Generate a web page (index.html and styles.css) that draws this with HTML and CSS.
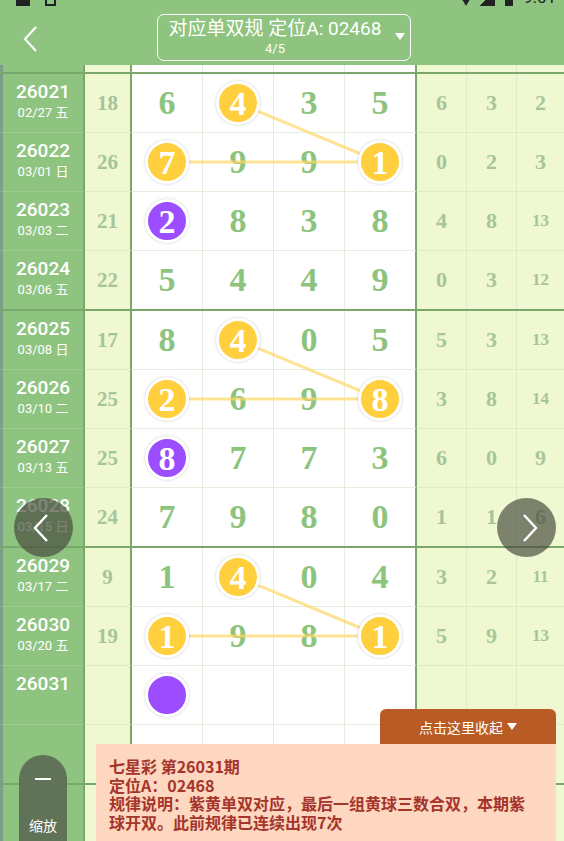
FILE: index.html
```html
<!DOCTYPE html>
<html lang="zh">
<head>
<meta charset="utf-8">
<link rel="stylesheet" href="styles.css">
</head>
<body>
<div class="app">
  <header class="topbar">
    <div class="status">
      <span class="sq sq1"></span><span class="sq sq2"></span>
      <span class="spacer"></span>
      <span class="tri"></span><span class="sig"></span><span class="bat"></span>
      <span class="time">9:01</span>
    </div>
    <div class="nav">
      <div class="back">
        <svg width="16" height="26" viewBox="0 0 16 26"><polyline points="13,1 2,13 13,25" fill="none" stroke="#fff" stroke-width="2"/></svg>
      </div>
      <div class="title">
        <div class="t1">对应单双规 定位A: 02468</div>
        <div class="t2">4/5</div>
        <span class="caret"></span>
      </div>
    </div>
  </header>

  <main class="table">
    <div class="row partial">
      <div class="c-id"></div><div class="c-sum"></div><div class="c-m"></div><div class="c-m"></div><div class="c-m"></div><div class="c-m last"></div><div class="c-r"></div><div class="c-r"></div><div class="c-r"></div>
    </div>
    <div class="sep"></div>

    <section class="group">
      <div class="row">
        <div class="c-id"><b>26021</b><span>02/27 五</span></div><div class="c-sum">18</div>
        <div class="c-m">6</div><div class="c-m"><i class="ball y">4</i></div><div class="c-m">3</div><div class="c-m last">5</div>
        <div class="c-r">6</div><div class="c-r">3</div><div class="c-r">2</div>
      </div>
      <div class="row">
        <div class="c-id"><b>26022</b><span>03/01 日</span></div><div class="c-sum">26</div>
        <div class="c-m"><i class="ball y">7</i></div><div class="c-m">9</div><div class="c-m">9</div><div class="c-m last"><i class="ball y">1</i></div>
        <div class="c-r">0</div><div class="c-r">2</div><div class="c-r">3</div>
      </div>
      <div class="row">
        <div class="c-id"><b>26023</b><span>03/03 二</span></div><div class="c-sum">21</div>
        <div class="c-m"><i class="ball p">2</i></div><div class="c-m">8</div><div class="c-m">3</div><div class="c-m last">8</div>
        <div class="c-r">4</div><div class="c-r">8</div><div class="c-r small">13</div>
      </div>
      <div class="row end">
        <div class="c-id"><b>26024</b><span>03/06 五</span></div><div class="c-sum">22</div>
        <div class="c-m">5</div><div class="c-m">4</div><div class="c-m">4</div><div class="c-m last">9</div>
        <div class="c-r">0</div><div class="c-r">3</div><div class="c-r small">12</div>
      </div>
      <svg class="links" width="564" height="236" viewBox="0 0 564 236"><line x1="238" y1="29" x2="380" y2="88"/><line x1="167" y1="88" x2="380" y2="88"/></svg>
    </section>
    <div class="sep"></div>

    <section class="group">
      <div class="row">
        <div class="c-id"><b>26025</b><span>03/08 日</span></div><div class="c-sum">17</div>
        <div class="c-m">8</div><div class="c-m"><i class="ball y">4</i></div><div class="c-m">0</div><div class="c-m last">5</div>
        <div class="c-r">5</div><div class="c-r">3</div><div class="c-r small">13</div>
      </div>
      <div class="row">
        <div class="c-id"><b>26026</b><span>03/10 二</span></div><div class="c-sum">25</div>
        <div class="c-m"><i class="ball y">2</i></div><div class="c-m">6</div><div class="c-m">9</div><div class="c-m last"><i class="ball y">8</i></div>
        <div class="c-r">3</div><div class="c-r">8</div><div class="c-r small">14</div>
      </div>
      <div class="row">
        <div class="c-id"><b>26027</b><span>03/13 五</span></div><div class="c-sum">25</div>
        <div class="c-m"><i class="ball p">8</i></div><div class="c-m">7</div><div class="c-m">7</div><div class="c-m last">3</div>
        <div class="c-r">6</div><div class="c-r">0</div><div class="c-r">9</div>
      </div>
      <div class="row end">
        <div class="c-id"><b>26028</b><span>03/15 日</span></div><div class="c-sum">24</div>
        <div class="c-m">7</div><div class="c-m">9</div><div class="c-m">8</div><div class="c-m last">0</div>
        <div class="c-r">1</div><div class="c-r">1</div><div class="c-r">6</div>
      </div>
      <svg class="links" width="564" height="236" viewBox="0 0 564 236"><line x1="238" y1="29" x2="380" y2="88"/><line x1="167" y1="88" x2="380" y2="88"/></svg>
    </section>
    <div class="sep"></div>

    <section class="group">
      <div class="row">
        <div class="c-id"><b>26029</b><span>03/17 二</span></div><div class="c-sum">9</div>
        <div class="c-m">1</div><div class="c-m"><i class="ball y">4</i></div><div class="c-m">0</div><div class="c-m last">4</div>
        <div class="c-r">3</div><div class="c-r">2</div><div class="c-r small">11</div>
      </div>
      <div class="row">
        <div class="c-id"><b>26030</b><span>03/20 五</span></div><div class="c-sum">19</div>
        <div class="c-m"><i class="ball y">1</i></div><div class="c-m">9</div><div class="c-m">8</div><div class="c-m last"><i class="ball y">1</i></div>
        <div class="c-r">5</div><div class="c-r">9</div><div class="c-r small">13</div>
      </div>
      <div class="row">
        <div class="c-id"><b>26031</b><span>&nbsp;</span></div><div class="c-sum"></div>
        <div class="c-m"><i class="ball p"></i></div><div class="c-m"></div><div class="c-m"></div><div class="c-m last"></div>
        <div class="c-r"></div><div class="c-r"></div><div class="c-r"></div>
      </div>
      <div class="row end">
        <div class="c-id"></div><div class="c-sum"></div>
        <div class="c-m"></div><div class="c-m"></div><div class="c-m"></div><div class="c-m last"></div>
        <div class="c-r"></div><div class="c-r"></div><div class="c-r"></div>
      </div>
      <svg class="links" width="564" height="236" viewBox="0 0 564 236"><line x1="238" y1="29" x2="380" y2="88"/><line x1="167" y1="88" x2="380" y2="88"/></svg>
    </section>
    <div class="sep"></div>
    <div class="row">
      <div class="c-id"></div><div class="c-sum"></div><div class="c-m"></div><div class="c-m"></div><div class="c-m"></div><div class="c-m last"></div><div class="c-r"></div><div class="c-r"></div><div class="c-r"></div>
    </div>
  </main>

  <button class="arrow arrow-left" aria-label="上一个">
    <svg width="20" height="30" viewBox="0 0 20 30"><polyline points="15,2 3,15 15,28" fill="none" stroke="#fff" stroke-width="2.4"/></svg>
  </button>
  <button class="arrow arrow-right" aria-label="下一个">
    <svg width="20" height="30" viewBox="0 0 20 30"><polyline points="5,2 17,15 5,28" fill="none" stroke="#fff" stroke-width="2.4"/></svg>
  </button>

  <div class="zoom-btn">
    <span class="minus"></span>
    <span class="zlabel">缩放</span>
  </div>

  <div class="sheet">
    <div class="tab">点击这里收起 <span class="tcaret"></span></div>
    <div class="panel">
      <p>七星彩 第26031期</p>
      <p>定位A：02468</p>
      <p>规律说明：紫黄单双对应，最后一组黄球三数合双，本期紫球开双。此前规律已连续出现7次</p>
    </div>
  </div>
</div>
</body>
</html>
```
FILE: styles.css
```css
* { box-sizing: border-box; margin: 0; padding: 0; }
html, body { width: 564px; height: 841px; overflow: hidden; }
body {
  font-family: Roboto, "Noto Sans CJK SC", sans-serif;
  background: #eff8d0;
}
.app { position: relative; width: 564px; height: 841px; overflow: hidden; }

/* header */
.topbar { height: 65px; background: #8fc480; display: flex; flex-direction: column; }
.status {
  height: 6px; overflow: hidden; display: flex; align-items: flex-end;
  padding: 0 8px 0 16px;
}
.sq { display: block; background: #222; }
.sq1 { width: 14px; height: 14px; }
.sq2 { width: 11px; height: 14px; margin-left: 15px; border: 2px solid #222; background: transparent; }
.spacer { flex: 1; }
.tri { width: 0; height: 0; border-left: 7px solid transparent; border-right: 7px solid transparent; border-top: 12px solid #222; }
.sig { width: 16px; height: 14px; background: linear-gradient(to top left, #222 50%, transparent 50%); margin-left: 6px; }
.bat { width: 8px; height: 14px; background: #222; margin-left: 10px; }
.time { font-size: 17px; line-height: 17px; color: #222; margin-left: 10px; }

.nav { display: grid; grid-template-columns: 157px 254px 1fr; margin-top: 8px; }
.back { display: flex; align-items: center; padding-left: 23px; padding-top: 2px; }
.title {
  position: relative; height: 47px; border: 1.5px solid #fff; border-radius: 7px;
  color: #fff; text-align: center; padding-top: 2px; padding-right: 18px;
}
.t1 { font-size: 19px; line-height: 23px; }
.t2 { font-size: 13px; line-height: 17px; }
.caret {
  position: absolute; right: 5px; top: 18px; width: 0; height: 0;
  border-left: 5px solid transparent; border-right: 5px solid transparent; border-top: 7px solid #fff;
}

/* table */
.table { display: flex; flex-direction: column; }
.group { position: relative; }
.row {
  display: grid; height: 59px;
  grid-template-columns: 85px 47px 71px 71px 71px 72px 50px 50px 47px;
}
.row.end { height: 58px; }
.row.partial { height: 7px; }
.row > div { border-bottom: 1px solid #e3efdc; display: flex; align-items: center; justify-content: center; }
.row.end > div, .row.partial > div { border-bottom: none; }
.sep { height: 2px; background: #7aa86b; }

.c-id {
  background: #8fc480; color: #fff; flex-direction: column;
  border-left: 3px solid #7d9e8a; border-right: 2px solid #7aa86b;
  border-bottom-color: #9ccb8e !important;
}
.c-id b { font-weight: 500; font-size: 19px; line-height: 22px; margin-top: -4px; }
.c-id span { font-size: 13px; line-height: 17px; margin-top: 1px; }
.c-sum {
  background: #eff8d0; border-right: 2px solid #7aa86b; border-bottom-color: #dcebc8 !important;
  font-family: "Liberation Serif", serif; font-weight: 700; font-size: 21px; color: #a6c499;
}
.c-m {
  background: #fff; border-right: 1px solid #e3efdc;
  font-family: "Liberation Serif", serif; font-weight: 700; font-size: 34px; color: #8dc47d;
}
.c-m.last { border-right: 2px solid #7aa86b; }
.c-r {
  background: #eff8d0; border-right: 1px solid #dcebc8; border-bottom-color: #dcebc8 !important;
  font-family: "Liberation Serif", serif; font-weight: 700; font-size: 22px; color: #a6c699;
}
.c-r:last-child { border-right: none; }
.c-r.small { font-size: 17px; }

.ball {
  position: relative; z-index: 2;
  width: 44px; height: 44px; border-radius: 50%; border: 3px solid #fff;
  box-shadow: 0 0 3px rgba(0, 0, 0, 0.2);
  display: flex; align-items: center; justify-content: center;
  font-style: normal; color: #fff; font-size: 34px; line-height: 1; padding-top: 1px;
}
.ball.y { background: #ffcf3e; }
.ball.p { background: #9b4dff; }

.links { position: absolute; left: 0; top: 0; z-index: 1; pointer-events: none; }
.links line { stroke: #ffd766; stroke-opacity: 0.7; stroke-width: 3; }

/* overlays */
.arrow {
  position: absolute; width: 59px; height: 59px; border-radius: 50%; border: none;
  background: rgba(69, 72, 59, 0.67); display: flex; align-items: center; justify-content: center;
  z-index: 5;
}
.arrow-left { left: 14px; top: 498px; }
.arrow-left svg { margin-left: -4px; }
.arrow-right { left: 497px; top: 498px; }
.arrow-right svg { margin-left: 4px; }

.zoom-btn {
  position: absolute; left: 19px; top: 755px; width: 48px; height: 100px;
  border-radius: 24px 24px 0 0; background: #607358; z-index: 5;
  display: flex; flex-direction: column; align-items: center; color: #fff;
}
.minus { width: 16px; height: 2px; background: #fff; margin-top: 23px; }
.zlabel { font-family: "Noto Sans CJK SC", sans-serif; font-size: 14px; margin-top: 35px; }

.sheet {
  position: absolute; left: 96px; top: 709px; width: 460px; height: 132px;
  display: flex; flex-direction: column; align-items: flex-end; z-index: 6;
}
.tab {
  width: 176px; height: 35px; background: #b95b24; border-radius: 6px 6px 0 0;
  color: #fff; font-family: "Noto Sans CJK SC", sans-serif; font-size: 14px;
  display: flex; align-items: center; justify-content: center; gap: 4px;
}
.tcaret { width: 0; height: 0; border-left: 5px solid transparent; border-right: 5px solid transparent; border-top: 7px solid #fff; }
.panel {
  align-self: stretch; flex: 1; background: #fdd7c0;
  padding: 13px 22px 0 13px;
  font-family: "Noto Sans CJK SC", sans-serif; font-weight: 700; font-size: 16px; line-height: 18.5px;
  color: #a5352b;
}
```
